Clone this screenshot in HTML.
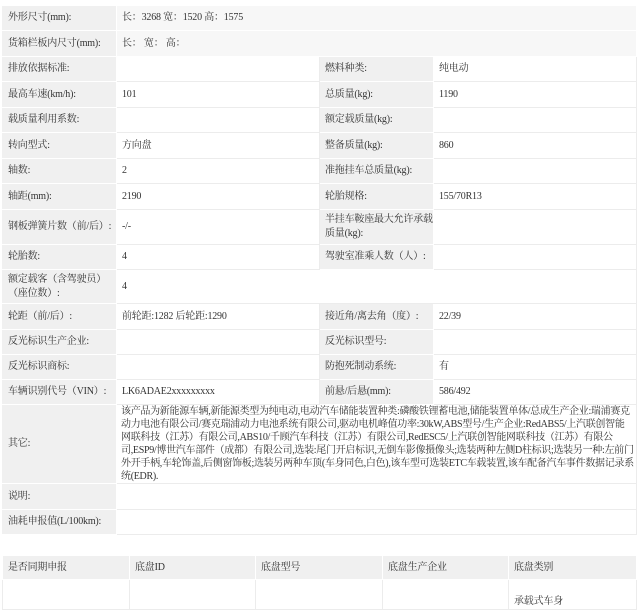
<!DOCTYPE html>
<html><head><meta charset="utf-8"><style>
body{margin:0;background:#fff;width:640px;height:592px;overflow:hidden;font-family:"Liberation Serif","Noto Serif CJK SC",serif;font-size:10px;color:#333}
table{border-collapse:collapse;table-layout:fixed;position:absolute;left:2px;width:634px}
td{padding:0 1px 0 5px;border:1px solid #ececec;line-height:14px;vertical-align:middle;overflow:hidden;white-space:nowrap;letter-spacing:-0.2px}
td.w{white-space:normal;line-height:13px;letter-spacing:-0.3px;padding:0 2px 0 4px}
td.l{background:#f0f0f0;border-color:#fff #fff #fff #f0f0f0}
#t1{top:5px}
#t2{top:555px}
#t2 td{background:#fff}
#t2 tr:first-child td{background:#f0f0f0;border-color:#fff}
</style></head><body>
<table id="t1">
<colgroup><col style="width:114px"><col style="width:203px"><col style="width:114px"><col style="width:203px"></colgroup>
<tr style="height:25px"><td class="l">外形尺寸(mm):</td><td colspan="3" style="background:#f7f7f7;border-color:#fff">长：3268 宽：1520 高：1575</td></tr>
<tr style="height:26px"><td class="l">货箱栏板内尺寸(mm):</td><td colspan="3" style="background:#f7f7f7;border-color:#fff">长： 宽： 高：</td></tr>
<tr style="height:25px"><td class="l">排放依据标准:</td><td></td><td class="l">燃料种类:</td><td>纯电动</td></tr>
<tr style="height:26px"><td class="l">最高车速(km/h):</td><td>101</td><td class="l">总质量(kg):</td><td>1190</td></tr>
<tr style="height:25px"><td class="l">载质量利用系数:</td><td></td><td class="l">额定载质量(kg):</td><td></td></tr>
<tr style="height:26px"><td class="l">转向型式:</td><td>方向盘</td><td class="l">整备质量(kg):</td><td>860</td></tr>
<tr style="height:25px"><td class="l">轴数:</td><td>2</td><td class="l">准拖挂车总质量(kg):</td><td></td></tr>
<tr style="height:26px"><td class="l">轴距(mm):</td><td>2190</td><td class="l">轮胎规格:</td><td>155/70R13</td></tr>
<tr style="height:35px"><td class="l">钢板弹簧片数（前/后）:</td><td>-/-</td><td class="l">半挂车鞍座最大允许承载<br>质量(kg):</td><td></td></tr>
<tr style="height:25px"><td class="l">轮胎数:</td><td>4</td><td class="l">驾驶室准乘人数（人）:</td><td></td></tr>
<tr style="height:34px"><td class="l">额定载客（含驾驶员）<br>（座位数）:</td><td colspan="3">4</td></tr>
<tr style="height:26px"><td class="l">轮距（前/后）:</td><td>前轮距:1282 后轮距:1290</td><td class="l">接近角/离去角（度）:</td><td>22/39</td></tr>
<tr style="height:25px"><td class="l">反光标识生产企业:</td><td></td><td class="l">反光标识型号:</td><td></td></tr>
<tr style="height:25px"><td class="l">反光标识商标:</td><td></td><td class="l">防抱死制动系统:</td><td>有</td></tr>
<tr style="height:25px"><td class="l">车辆识别代号（VIN）:</td><td>LK6ADAE2xxxxxxxxx</td><td class="l">前悬/后悬(mm):</td><td>586/492</td></tr>
<tr style="height:78px"><td class="l">其它:</td><td colspan="3" class="w">该产品为新能源车辆,新能源类型为纯电动,电动汽车储能装置种类:磷酸铁锂蓄电池,储能装置单体/总成生产企业:瑞浦赛克动力电池有限公司/赛克瑞浦动力电池系统有限公司,驱动电机峰值功率:30kW,ABS型号/生产企业:RedABS5/上汽联创智能网联科技（江苏）有限公司,ABS10/千顾汽车科技（江苏）有限公司,RedESC5/上汽联创智能网联科技（江苏）有限公司,ESP9/博世汽车部件（成都）有限公司,选装:尾门开启标识,无倒车影像摄像头;选装两种左侧D柱标识;选装另一种:左前门外开手柄,车轮饰盖,后侧窗饰板;选装另两种车顶(车身同色,白色),该车型可选装ETC车载装置,该车配备汽车事件数据记录系统(EDR).</td></tr>
<tr style="height:26px"><td class="l">说明:</td><td colspan="3"></td></tr>
<tr style="height:25px"><td class="l">油耗申报值(L/100km):</td><td colspan="3"></td></tr>
</table>
<table id="t2">
<colgroup><col style="width:127px"><col style="width:126px"><col style="width:127px"><col style="width:126px"><col style="width:128px"></colgroup>
<tr style="height:24px"><td>是否同期申报</td><td>底盘ID</td><td>底盘型号</td><td>底盘生产企业</td><td>底盘类别</td></tr>
<tr style="height:30px"><td></td><td></td><td></td><td></td><td style="vertical-align:bottom">承载式车身</td></tr>
</table>
</body></html>
